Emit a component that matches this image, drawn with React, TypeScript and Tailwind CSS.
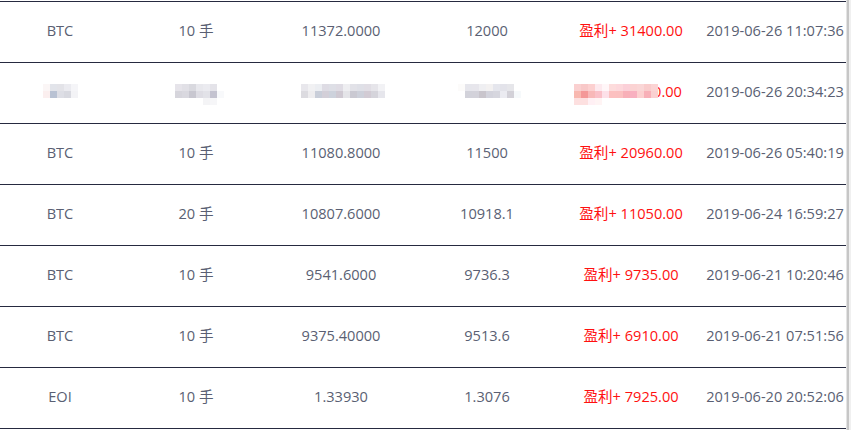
import { Fragment } from "react";

type Row = {
  coin: string;
  lots: string;
  open: string;
  close: string;
  profit: string;
  time: string;
};

const rows: (Row | null)[] = [
  { coin: "BTC", lots: "10 手", open: "11372.0000", close: "12000", profit: "31400.00", time: "2019-06-26 11:07:36" },
  null,
  { coin: "BTC", lots: "10 手", open: "11080.8000", close: "11500", profit: "20960.00", time: "2019-06-26 05:40:19" },
  { coin: "BTC", lots: "20 手", open: "10807.6000", close: "10918.1", profit: "11050.00", time: "2019-06-24 16:59:27" },
  { coin: "BTC", lots: "10 手", open: "9541.6000", close: "9736.3", profit: "9735.00", time: "2019-06-21 10:20:46" },
  { coin: "BTC", lots: "10 手", open: "9375.40000", close: "9513.6", profit: "6910.00", time: "2019-06-21 07:51:56" },
  { coin: "EOI", lots: "10 手", open: "1.33930", close: "1.3076", profit: "7925.00", time: "2019-06-20 20:52:06" },
];

// pixelated blur blocks, 7px each
const blur = {
  coin: [
    ["#fbf6f6", "#e2e4ea", "#e3e3e8", "#ebebf0", "#f5f5f8"],
    ["#fbefef", "#b9c2d3", "#dddee5", "#d8d9e0", "#f3f3f6"],
    ["", "", "", "", ""],
  ],
  lots: [
    ["#e6e4ea", "#e1e0e6", "#d9d9df", "#e8e8ed", "#ebebf0", "#e4e3e9", ""],
    ["#d6d5dc", "#d9d8df", "#c8c7d0", "#dedde4", "#e2e2e8", "#c4c3d0", "#f8f9fb"],
    ["", "", "", "", "#f4f4f6", "#f6f6f8", ""],
  ],
  open: [
    ["#e8e7ec", "#f1f1f3", "#eceef2", "#dedce4", "#dedfe6", "#dfdce4", "#eeeef1", "#e2e2e8", "#dfe0e7", "#e1dee5", "#e6e5ea", "#f2f2f5"],
    ["#dcdbe0", "#eeedef", "#c9ced9", "#d3cfd8", "#cdd2dc", "#cfc9d2", "#e4e4e8", "#cac9d2", "#cdd0da", "#d2cbd4", "#d5d4db", "#e6e6ec"],
    ["", "", "", "", "", "", "", "", "", "", "", ""],
  ],
  close: [
    ["#fcfbfa", "#e6e6ec", "#e7e6ec", "#efeff2", "#f3f1f1", "#e5e6ed", "#e3e3ea", "#e6e6ea", ""],
    ["", "#d2d2da", "#d3d2da", "#c9c5cc", "#d3d3dc", "#d6d6de", "#ebebf1", "#d3d1d8", "#f6f9fb"],
    ["", "", "", "", "", "", "", "", ""],
  ],
  profit: [
    ["#fad0d0", "#f8c8c8", "#fcd0d0", "#fde9ee", "#fff6f8", "#fddcdc", "#fdd8dc", "#fbd0d8", "#fbd3d3", "#fad6d6", "#f9cccc", "#fbd4d4"],
    ["#f8b8b0", "#f49898", "#f8b8b8", "#fac0c8", "#fde0e8", "#fcc0c0", "#fbc0c0", "#f8b0b8", "#f8b0c0", "#fcd0d0", "#f8b0b8", "#fad0d0"],
    ["#fde0e0", "#fde0e0", "#fff0f4", "#fff4f4", "", "", "", "", "", "", "", ""],
  ],
};

const Mosaic = ({ grid, className = "" }: { grid: string[][]; className?: string }) => (
  <div className={"flex flex-col mt-[5px] " + className}>
    {grid.map((line, i) => (
      <div key={i} className="flex">
        {line.map((c, j) => (
          <div key={j} className="w-[7px] h-[7px]" style={{ backgroundColor: c || "transparent" }} />
        ))}
      </div>
    ))}
  </div>
);

const cell = "flex items-center justify-center whitespace-nowrap pb-[2px]";

export default function App() {
  return (
    <div className="w-[851px] h-[430px] bg-white flex font-['Open_Sans','Noto_Sans_CJK_SC',sans-serif] text-[14.6px] text-[#5a5f73] overflow-hidden">
      <div className="w-[846px] pt-[1px]">
        {rows.map((r, idx) => (
          <div key={idx} className="h-[61px] border-t border-[#262a40] grid grid-cols-[120px_152px_138px_154px_134px_148px]">
            {r ? (
              <Fragment>
                <div className={cell}>{r.coin}</div>
                <div className={cell}>{r.lots}</div>
                <div className={cell}>{r.open}</div>
                <div className={cell}>{r.close}</div>
                <div className={cell + " text-[#ff1010]"}>盈利+ {r.profit}</div>
                <div className={cell + " pl-[6px]"}>{r.time}</div>
              </Fragment>
            ) : (
              <Fragment>
                <div className={cell}><Mosaic grid={blur.coin} /></div>
                <div className={cell}><Mosaic grid={blur.lots} className="ml-[7px]" /></div>
                <div className={cell}><Mosaic grid={blur.open} className="ml-[4px]" /></div>
                <div className={cell}><Mosaic grid={blur.close} className="ml-[4px]" /></div>
                <div className={cell + " text-[#ff1010]"}>
                  <Mosaic grid={blur.profit} className="relative z-10 -ml-[6px]" />
                  <span className="-ml-[5px]">0.00</span>
                </div>
                <div className={cell + " pl-[6px]"}>2019-06-26 20:34:23</div>
              </Fragment>
            )}
          </div>
        ))}
        <div className="border-t border-[#262a40]" />
      </div>
      <div className="w-[1px] bg-[#e4e4e4]" />
      <div className="w-[2px] bg-[#c6c6c6]" />
      <div className="flex-1 bg-[#f0f0f0]" />
    </div>
  );
}
